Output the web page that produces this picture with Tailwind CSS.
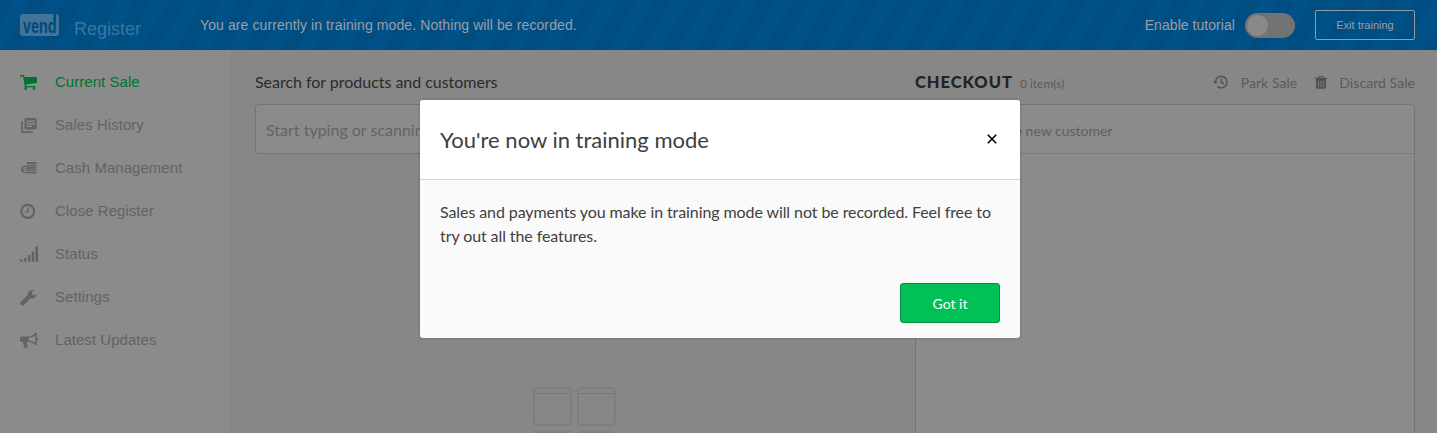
<!DOCTYPE html>
<html lang="en"><head><meta charset="utf-8"><title>Vend Register</title>
<script src="https://cdn.jsdelivr.net/npm/@tailwindcss/browser@4"></script></head>
<body class="relative flex h-[433px] w-[1437px] flex-col overflow-hidden bg-[#878787] font-['Lato',sans-serif]">
<header class="flex h-[50px] shrink-0 items-center bg-[#005188] bg-[repeating-linear-gradient(120deg,#004d82_0px,#004d82_11.6px,#005188_11.6px,#005188_26.6px,#004d82_26.6px,#004d82_30px)] pl-5 pr-[22px] font-['Liberation_Sans',sans-serif] text-[#9b9fa3]">
  <svg class="h-[22px] w-[39px] shrink-0 overflow-visible" viewBox="0 0 39 22"><path fill="#427498" d="M3 0H33.5V6H36V0A3 3 0 0 1 39 3V19A3 3 0 0 1 36 22H3A3 3 0 0 1 0 19V3A3 3 0 0 1 3 0Z"/><text transform="translate(3 18.6) scale(.685 1)" font-family="Liberation Sans" font-weight="700" font-size="21" fill="#00487b">vend</text></svg>
  <span class="ml-[15px] w-[126px] pt-[7px] text-[18px] leading-6 text-[#3a759f]">Register</span>
  <span class="text-[14px] tracking-[0.1px]">You are currently in training mode. Nothing will be recorded.</span>
  <span class="ml-auto text-[14px] tracking-[0.05px]">Enable tutorial</span>
  <span class="ml-[10px] flex h-[25px] w-[50px] items-center rounded-full bg-[#737373] p-[2px]"><span class="size-[21px] rounded-full bg-[#8a8a8a]"></span></span>
  <span class="ml-5 flex h-[30px] w-[100px] items-center justify-center rounded-[2px] border border-[#8c9ba6] text-[11px]">Exit training</span>
</header>
<div class="flex min-h-0 flex-1 overflow-hidden">
  <nav class="flex w-[230px] shrink-0 flex-col bg-[#8b8b8b] pl-5 pt-[11px] font-['Liberation_Sans',sans-serif] text-[15px] tracking-[0.04px] text-[#636363]">
    <a class="flex h-[43px] items-center text-[#00752f]"><svg class="mr-[17px] size-[18px]" viewBox="0 0 18 18" fill="currentColor"><path d="M0 1H4L4.5 3H17V9L6 10.5L6.3 12H15.5V13.3H5L3 2.4H0Z"/><circle cx="5.7" cy="14.5" r="1.4"/><circle cx="14" cy="14.5" r="1.4"/></svg>Current Sale</a>
    <a class="flex h-[43px] items-center"><svg class="mr-[17px] size-[18px]" viewBox="0 0 18 18" fill="currentColor"><path d="M1 4H2.7V14.3H13V16H2.5A1.5 1.5 0 0 1 1 14.5Z"/><path fill-rule="evenodd" d="M6 1H15.2A1.5 1.5 0 0 1 16.7 2.5V11A1.5 1.5 0 0 1 15.2 12.5H6A1.5 1.5 0 0 1 4.5 11V2.5A1.5 1.5 0 0 1 6 1ZM6.5 3.5V5H15V3.5ZM6.5 6V7.5H15V6ZM6.5 8.5V10H12V8.5Z"/></svg>Sales History</a>
    <a class="flex h-[43px] items-center"><svg class="mr-[17px] size-[18px]" viewBox="0 0 18 18" fill="currentColor"><path d="M7 2H16.5V4H7ZM7 4.7H16.5V6.4H7ZM9 7.1H16.5V8.8H9ZM9 9.5H16.5V11.2H9ZM7.5 11.9H16.5V13.6H7.5Z"/><circle cx="5" cy="9.3" r="3.9"/><text x="5" y="12" text-anchor="middle" font-size="7.5" font-weight="700" fill="#8b8b8b">$</text></svg>Cash Management</a>
    <a class="flex h-[43px] items-center"><svg class="mr-[17px] size-[18px]" viewBox="0 0 18 18" fill="none" stroke="currentColor"><circle cx="7.7" cy="8.3" r="6.5" stroke-width="2.2"/><path stroke-width="1.4" d="M8.2 4.5V8.9H5"/></svg>Close Register</a>
    <a class="flex h-[43px] items-center"><svg class="mr-[17px] size-[18px]" viewBox="0 0 18 18" fill="currentColor"><path d="M0 13.5H2.6V15.7H0ZM4 12H6.6V15.7H4ZM8 9H10.4V15.7H8ZM11.7 5.5H14.2V15.7H11.7ZM15.4 .5H18V15.7H15.4Z"/></svg>Status</a>
    <a class="flex h-[43px] items-center"><svg class="mr-[17px] size-[18px]" viewBox="0 0 18 18"><path fill="currentColor" d="M.8 13L7.8 6A4.7 4.7 0 0 1 14.4 1.3L11.7 3L12 5.6L14.1 6.6L16.8 5.1A4.7 4.7 0 0 1 10.7 9.3L4 16A2.2 2.2 0 0 1 .8 13Z"/></svg>Settings</a>
    <a class="flex h-[43px] items-center"><svg class="mr-[17px] size-[18px]" viewBox="0 0 18 18"><path fill="currentColor" fill-rule="evenodd" d="M1.5 4.5H8C11.5 4.5 14 2.5 15.5 1H16.8V6A1.5 1.5 0 0 1 16.8 9V13H15.5C13.5 11.2 11 9.8 7.2 9.7C6.3 11 7.8 12 7 13.2L8 14.8C7 16.2 5 16.1 4.2 15.4L2.8 9.7H1.5A1.4 1.4 0 0 1 0 8.2V6A1.5 1.5 0 0 1 1.5 4.5ZM8.5 5.8V8.7C11 8.8 13.5 9.8 15.4 11.3V3C13.5 4.5 11.2 5.6 8.5 5.8Z"/></svg>Latest Updates</a>
  </nav>
  <main class="flex flex-1 pl-[25px] pr-[22px]">
    <section class="w-[660px] shrink-0">
      <h2 class="h-[54px] pt-5 text-[16px] leading-6 tracking-[-0.03px] text-[#2b2b2b]">Search for products and customers</h2>
      <div class="flex h-[50px] w-[640px] items-center rounded-[4px] border border-[#747474] bg-[#8b8b8b] pl-[10px] pt-[2px] text-[16px] text-[#636363]">Start typing or scanning…</div>
      <div class="ml-[278px] mt-[233px] grid h-[46px] w-[83px] grid-cols-2 gap-x-[5px] gap-y-[5px] overflow-hidden">
        <div class="h-[39px] rounded-[4px] border-2 border-[#7e7e7e] pt-[4px]"><div class="h-px bg-[#777]"></div></div>
        <div class="h-[39px] rounded-[4px] border-2 border-[#7e7e7e] pt-[4px]"><div class="h-px bg-[#777]"></div></div>
        <div class="h-[39px] rounded-[4px] border-2 border-[#7e7e7e]"></div>
        <div class="h-[39px] rounded-[4px] border-2 border-[#7e7e7e]"></div>
      </div>
    </section>
    <section class="flex flex-1 flex-col">
      <div class="flex h-[54px] items-start pt-5 leading-6 text-[#5b5b5b]">
        <h2 class="text-[16.5px] font-black tracking-[0.95px] text-[#222]">CHECKOUT</h2><span class="ml-[7px] pt-[2px] text-[12px]">0 item(s)</span>
        <svg class="ml-auto mt-[4px] h-4 w-4" viewBox="0 0 16 16" fill="none" stroke="#505050" stroke-width="1.4"><path d="M2.4 8A5.8 5.8 0 1 1 4.3 12.4M8.3 4.7V8.2L11 9.8"/><path d="M0 7.3H5L2.5 10Z" fill="#505050" stroke="none"/></svg>
        <span class="ml-[12px] pt-[1px] text-[14px] tracking-[0.06px]">Park Sale</span>
        <svg class="ml-[18px] mt-[6px] h-[13px] w-[12px]" viewBox="0 0 12 13"><path fill="#505050" fill-rule="evenodd" d="M3.5 1.8V.8Q3.5 0 4.3 0H7.7Q8.5 0 8.5.8V1.8H12V3.1H11V11Q11 12.8 9.3 12.8H2.7Q1 12.8 1 11V3.1H0V1.8ZM4.5 1.8H7.5V1H4.5ZM3.1 4.5V11H3.9V4.5ZM5.6 4.5V11H6.4V4.5ZM8.1 4.5V11H8.9V4.5Z"/></svg>
        <span class="ml-[12px] pt-[1px] text-[14px] tracking-[0.06px]">Discard Sale</span>
      </div>
      <div class="flex-1 rounded-t-[5px] border border-b-0 border-[#747474] bg-[#8b8b8b]"><div class="flex h-[49px] items-center border-b border-[#7b7b7b] pl-[23px] pt-[2px] text-[14px] text-[#606060]">Add or create new customer</div></div>
    </section>
  </main>
</div>
<div role="dialog" class="absolute left-[420px] top-[100px] flex h-[238px] w-[600px] flex-col overflow-hidden rounded-[3px] bg-[#fafafa] text-[#404040] shadow-[0_0_3px_rgba(0,0,0,0.25)]">
  <div class="flex h-20 shrink-0 items-center justify-between border-b border-[#d8d8d8] bg-white pl-5 pr-[23px]"><h1 class="text-[22px]">You're now in training mode</h1><svg class="mb-[2px] h-[10px] w-[10px]" viewBox="0 0 10 10" fill="none" stroke="#000" stroke-width="1.6"><path d="M.8.8L9.2 9.2M9.2.8L.8 9.2"/></svg></div>
  <p class="px-5 pt-5 text-[16px] leading-6 tracking-[-0.09px]">Sales and payments you make in training mode will not be recorded. Feel free to try out all the features.</p>
  <button class="mb-[15px] ml-auto mr-5 mt-auto h-10 w-[100px] rounded-[3px] border border-[#078f3f] bg-[#00c156] text-[14px] text-white">Got it</button>
</div>
</body></html>
